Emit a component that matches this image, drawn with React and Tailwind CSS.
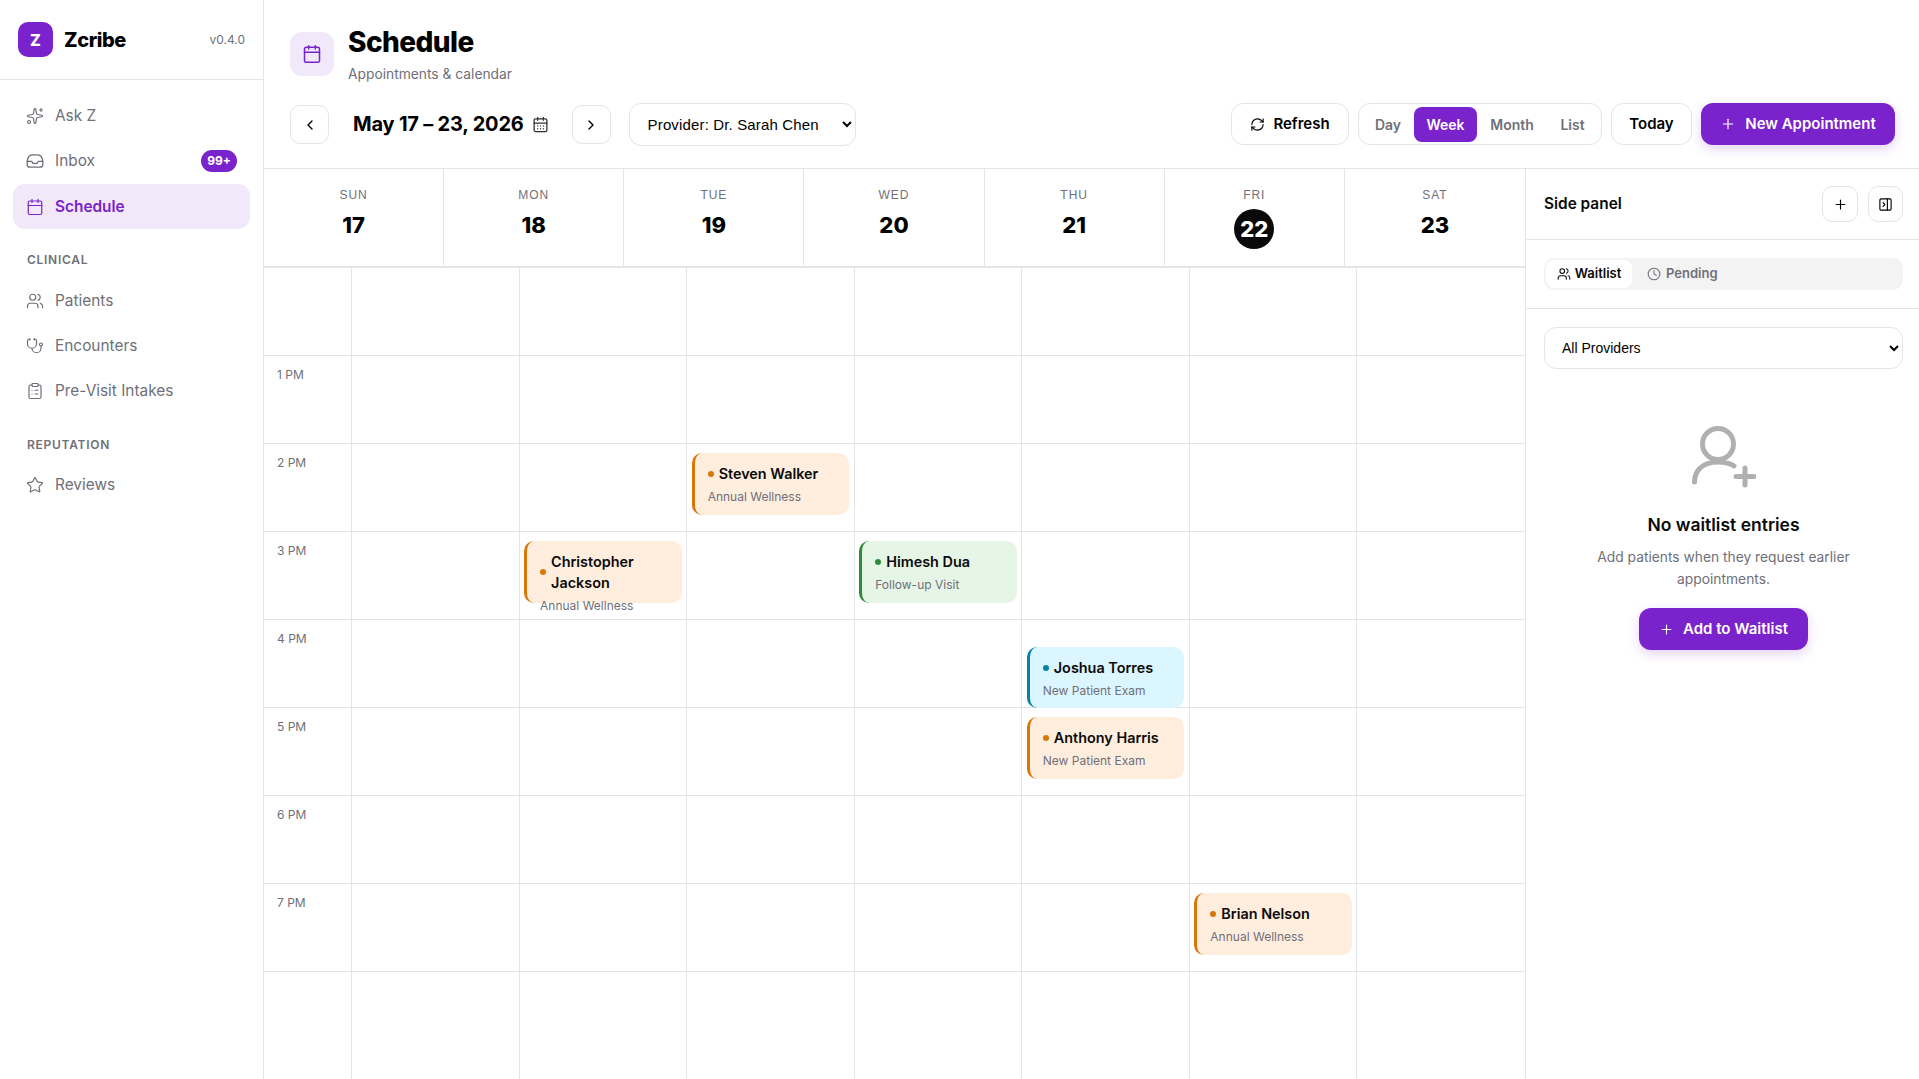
import {
  Sparkles, Calendar, CalendarDays, Users, Stethoscope, ClipboardList, Star,
  ChevronLeft, ChevronRight, RefreshCw, Plus, PanelRightClose, Clock,
} from 'lucide-react'

const DAYS = [
  ['SUN', 17], ['MON', 18], ['TUE', 19], ['WED', 20], ['THU', 21], ['FRI', 22], ['SAT', 23],
]
const HOURS = ['', '1 PM', '2 PM', '3 PM', '4 PM', '5 PM', '6 PM', '7 PM', '']

const TONES = {
  orange: { card: 'bg-[#ffeede] border-[#d97706]', dot: 'bg-[#d97706]' },
  green: { card: 'bg-[#e6f6e6] border-[#2e8b3a]', dot: 'bg-[#2e8b3a]' },
  blue: { card: 'bg-[#dcf6ff] border-[#0284a8]', dot: 'bg-[#0284a8]' },
}

const EVENTS = [
  { name: 'Steven Walker', type: 'Annual Wellness', tone: 'orange', row: 2, col: 2, top: 'top-[9px]', h: 'h-[62px]' },
  { name: 'Christopher Jackson', type: 'Annual Wellness', tone: 'orange', row: 3, col: 1, top: 'top-[9px]', h: 'h-[62px]' },
  { name: 'Himesh Dua', type: 'Follow-up Visit', tone: 'green', row: 3, col: 3, top: 'top-[9px]', h: 'h-[62px]' },
  { name: 'Joshua Torres', type: 'New Patient Exam', tone: 'blue', row: 4, col: 4, top: 'top-[27px]', h: 'h-[61px]' },
  { name: 'Anthony Harris', type: 'New Patient Exam', tone: 'orange', row: 5, col: 4, top: 'top-[9px]', h: 'h-[62px]' },
  { name: 'Brian Nelson', type: 'Annual Wellness', tone: 'orange', row: 7, col: 5, top: 'top-[9px]', h: 'h-[62px]' },
]

// rounder than lucide's Inbox, so drawn by hand
function InboxIcon({ className, strokeWidth }) {
  return (
    <svg className={className} viewBox="1 1 22 22" fill="none" stroke="currentColor" strokeWidth={strokeWidth} strokeLinecap="round" strokeLinejoin="round">
      <path d="M2.5 13C2.5 8.5 5 4.5 8.5 4.5h7c3.5 0 6 4 6 8.5v3.5a3 3 0 0 1-3 3h-13a3 3 0 0 1-3-3z" />
      <path d="M2.5 12.5h5.500l1.500 2.500h5l1.500-2.500h5.500" />
    </svg>
  )
}

function NavItem({ icon: Icon, label, active, badge, className = '' }) {
  return (
    <a className={`flex items-center h-[45px] px-[13px] rounded-[12px] text-[15.4px] ${className} ${active ? 'bg-[#f1e8f9] text-[#7a22cc] font-semibold' : 'text-[#6f6f78]'}`}>
      <Icon className="w-[18px] h-[18px] mr-[11px] shrink-0" strokeWidth={1.6} />
      <span className="flex-1">{label}</span>
      {badge && (
        <span className="bg-[#7a22cc] text-white text-[12px] font-bold rounded-full h-[22px] w-[36px] flex items-center justify-center">
          {badge}
        </span>
      )}
    </a>
  )
}

function Sidebar() {
  return (
    <aside className="w-[264px] shrink-0 border-r border-[#e5e5e5] flex flex-col">
      <div className="h-[80px] shrink-0 border-b border-[#e5e5e5] flex items-center pl-[18px] pr-[18px]">
        <div className="w-[35px] h-[35px] rounded-[10px] bg-[#7a22cc] text-white font-extrabold text-[16px] flex items-center justify-center mr-[11px]">Z</div>
        <span className="flex-1 text-[20px] font-extrabold text-black tracking-[-0.02em]">Zcribe</span>
        <span className="text-[12px] text-[#6f6f78]">v0.4.0</span>
      </div>
      <nav className="flex flex-col px-[13px] pt-[13px]">
        <NavItem icon={Sparkles} label="Ask Z" />
        <NavItem icon={InboxIcon} label="Inbox" badge="99+" />
        <NavItem icon={Calendar} label="Schedule" active className="mt-[1px]" />
        <div className="text-[12px] font-semibold tracking-[0.06em] text-[#6f6f78] pl-[14px] pt-[22px] pb-[9px] leading-[18px]">CLINICAL</div>
        <NavItem icon={Users} label="Patients" />
        <NavItem icon={Stethoscope} label="Encounters" />
        <NavItem icon={ClipboardList} label="Pre-Visit Intakes" />
        <div className="text-[12px] font-semibold tracking-[0.06em] text-[#6f6f78] pl-[14px] pt-[22px] pb-[8px] mt-[1px] leading-[18px]">REPUTATION</div>
        <NavItem icon={Star} label="Reviews" />
      </nav>
    </aside>
  )
}

function Header() {
  return (
    <header className="h-[169px] shrink-0 border-b border-[#e5e5e5] pl-[26px] pr-[24px] pt-[32px]">
      <div className="flex h-[44px]">
        <div className="w-[44px] h-[44px] rounded-[12px] bg-[#f1e8f9] text-[#7a22cc] flex items-center justify-center mr-[14px]">
          <Calendar className="w-[20px] h-[20px]" strokeWidth={1.8} />
        </div>
        <div className="flex flex-col -mt-[6px]">
          <h1 className="text-[28px] leading-[32px] font-extrabold text-black tracking-[-0.02em]">Schedule</h1>
          <p className="text-[13.8px] leading-[20px] text-[#6f6f78] mt-[6px]">Appointments &amp; calendar</p>
        </div>
      </div>
      <div className="flex items-center justify-between mt-[27px] h-[43px]">
        <div className="flex items-center">
          <button className="w-[39px] h-[39px] rounded-[10px] border border-[#e5e5e5] flex items-center justify-center text-black">
            <ChevronLeft className="w-[16px] h-[16px]" />
          </button>
          <div className="flex items-center ml-[24px] mr-[23px] pb-[2px]">
            <span className="text-[20px] font-bold text-black tracking-[-0.01em] mr-[8px]">May 17 – 23, 2026</span>
            <CalendarDays className="w-[17px] h-[17px] text-[#333] mt-[2px]" strokeWidth={1.8} />
          </div>
          <button className="w-[39px] h-[39px] rounded-[10px] border border-[#e5e5e5] flex items-center justify-center text-black">
            <ChevronRight className="w-[16px] h-[16px]" />
          </button>
          <select className="ml-[18px] w-[227px] h-[43px] rounded-[12px] border border-[#e5e5e5] bg-white pl-[14px] pr-[16px] text-[15px] tracking-[0.01em] text-black font-['Liberation_Sans',sans-serif]">
            <option>Provider: Dr. Sarah Chen</option>
          </select>
        </div>
        <div className="flex items-center gap-[9px] self-start">
          <button className="w-[118px] h-[42px] rounded-[12px] border border-[#e5e5e5] flex items-center justify-center gap-[8px] text-[15px] font-semibold text-black">
            <RefreshCw className="w-[15px] h-[15px]" strokeWidth={1.8} />
            Refresh
          </button>
          <div className="flex items-center h-[42px] rounded-[12px] border border-[#e5e5e5] p-[3px] text-[14px] font-semibold text-[#6f6f78]">
            <button className="w-[52px] h-[35px]">Day</button>
            <button className="w-[63px] h-[35px] rounded-[8px] bg-[#7a22cc] text-white">Week</button>
            <button className="w-[70px] h-[35px]">Month</button>
            <button className="w-[51px] h-[35px]">List</button>
          </div>
          <button className="w-[81px] h-[42px] rounded-[12px] border border-[#e5e5e5] text-[15px] font-semibold text-black">Today</button>
          <button className="w-[194px] h-[42px] rounded-[12px] bg-[#7a22cc] text-white text-[15px] font-semibold flex items-center justify-center gap-[9px] shadow-[0_4px_12px_rgba(122,34,204,0.2)]">
            <Plus className="w-[16px] h-[16px]" strokeWidth={1.8} />
            New Appointment
          </button>
        </div>
      </div>
    </header>
  )
}

function EventCard({ ev }) {
  const tone = TONES[ev.tone]
  return (
    <div className={`absolute left-[4.5px] right-[4.5px] ${ev.top} ${ev.h} rounded-[10px] border-l-[3px] pl-[13px] pr-[8px] pt-[10px] ${tone.card}`}>
      <div className="flex items-center gap-[5px]">
        <span className={`w-[6px] h-[6px] rounded-full shrink-0 ${tone.dot}`} />
        <span className="text-[14.4px] leading-[21px] font-semibold text-[#0a0a0a]">{ev.name}</span>
      </div>
      <div className="text-[12px] leading-[18px] mt-[4px] text-[#6f6f78] whitespace-nowrap">{ev.type}</div>
    </div>
  )
}

function WeekGrid() {
  return (
    <section className="flex-1 min-w-0 overflow-hidden">
      <div className="grid grid-cols-7 h-[99px] border-b-2 border-[#e5e5e5]">
        {DAYS.map(([d, n]) => (
          <div key={d} className="flex flex-col items-center border-r border-[#e5e5e5] last:border-r-0 pt-[18px]">
            <span className="text-[12px] leading-[16px] tracking-[0.08em] text-[#6f6f78] font-['Liberation_Sans',sans-serif]">{d}</span>
            {n === 22 ? (
              <span className="mt-[6px] w-[40px] h-[40px] rounded-full bg-[#0a0a0a] text-white text-[22px] font-extrabold flex items-center justify-center">{n}</span>
            ) : (
              <span className="mt-[6px] text-[22px] leading-[32px] font-extrabold text-black">{n}</span>
            )}
          </div>
        ))}
      </div>
      {HOURS.map((label, row) => {
        const isLast = row === HOURS.length - 1
        return (
          <div key={row} className={`grid grid-cols-[88px_repeat(7,minmax(0,1fr))] ${isLast ? 'h-[200px]' : 'h-[88px]'}`}>
            <div className={`border-r border-[#e5e5e5] pl-[13px] pt-[11px] text-[12px] leading-[16px] text-[#6f6f78] ${isLast ? '' : 'border-b'}`}>{label}</div>
            {DAYS.map(([d], col) => (
              <div key={d} className={`relative border-r border-[#e5e5e5] last:border-r-0 ${isLast ? '' : 'border-b'}`}>
                {EVENTS.filter(ev => ev.row === row && ev.col === col).map(ev => (
                  <EventCard key={ev.name} ev={ev} />
                ))}
              </div>
            ))}
          </div>
        )
      })}
    </section>
  )
}

function SidePanel() {
  return (
    <aside className="w-[394px] shrink-0 border-l border-[#e5e5e5] flex flex-col">
      <div className="h-[71px] shrink-0 border-b border-[#e5e5e5] flex items-center pl-[18px] pr-[16px] gap-[10px]">
        <span className="flex-1 text-[15.4px] font-semibold text-[#0a0a0a]">Side panel</span>
        <button className="w-[36px] h-[36px] rounded-[10px] border border-[#e5e5e5] flex items-center justify-center text-black">
          <Plus className="w-[15px] h-[15px]" strokeWidth={1.8} />
        </button>
        <button className="w-[35px] h-[36px] rounded-[10px] border border-[#e5e5e5] flex items-center justify-center text-black">
          <PanelRightClose className="w-[15px] h-[15px]" strokeWidth={1.8} />
        </button>
      </div>
      <div className="h-[69px] shrink-0 border-b border-[#e5e5e5] pl-[18px] pr-[16px] pt-[18px]">
        <div className="flex h-[32px] rounded-[10px] bg-[#f3f3f4] p-[2px] text-[13px] font-semibold">
          <div className="w-[86px] rounded-[8px] bg-white text-[#0a0a0a] flex items-center justify-center gap-[4px]">
            <Users className="w-[14px] h-[14px]" strokeWidth={1.8} />
            Waitlist
          </div>
          <div className="flex items-center gap-[5px] pl-[15px] text-[#6f6f78]">
            <Clock className="w-[14px] h-[14px]" strokeWidth={1.8} />
            Pending
          </div>
        </div>
      </div>
      <div className="pl-[18px] pr-[16px] pt-[18px] flex flex-col">
        <select className="w-full h-[42px] rounded-[12px] border border-[#e5e5e5] bg-white pl-[13px] pr-[16px] text-[14px] text-black font-['Liberation_Sans',sans-serif]">
          <option>All Providers</option>
        </select>
        <div className="flex flex-col items-center pt-[57px]">
          <svg className="w-[64px] h-[62px]" viewBox="0 0 64 62" fill="none" stroke="#b0b0b0" strokeWidth="5" strokeLinecap="round">
            <circle cx="26" cy="18" r="15.5" />
            <path d="M2.5 56C2.5 46 9 36 26 36C33 36 38 37 42 40" />
            <path d="M53 42V59M44 50.5H62" />
          </svg>
          <h2 className="mt-[25px] text-[17.5px] leading-[24px] font-semibold text-[#0a0a0a]">No waitlist entries</h2>
          <p className="mt-[9px] w-[270px] text-center text-[13.8px] leading-[22px] text-[#6f6f78]">Add patients when they request earlier appointments.</p>
          <button className="mt-[18px] w-[169px] h-[42px] rounded-[12px] bg-[#7a22cc] text-white text-[15px] font-semibold flex items-center justify-center gap-[9px] shadow-[0_4px_12px_rgba(122,34,204,0.2)]">
            <Plus className="w-[15px] h-[15px]" strokeWidth={1.8} />
            Add to Waitlist
          </button>
        </div>
      </div>
    </aside>
  )
}

export default function App() {
  return (
    <div className="flex h-screen overflow-hidden bg-white font-['Inter',sans-serif]">
      <Sidebar />
      <main className="flex-1 min-w-0 flex flex-col">
        <Header />
        <div className="flex flex-1 min-h-0">
          <WeekGrid />
          <SidePanel />
        </div>
      </main>
    </div>
  )
}
